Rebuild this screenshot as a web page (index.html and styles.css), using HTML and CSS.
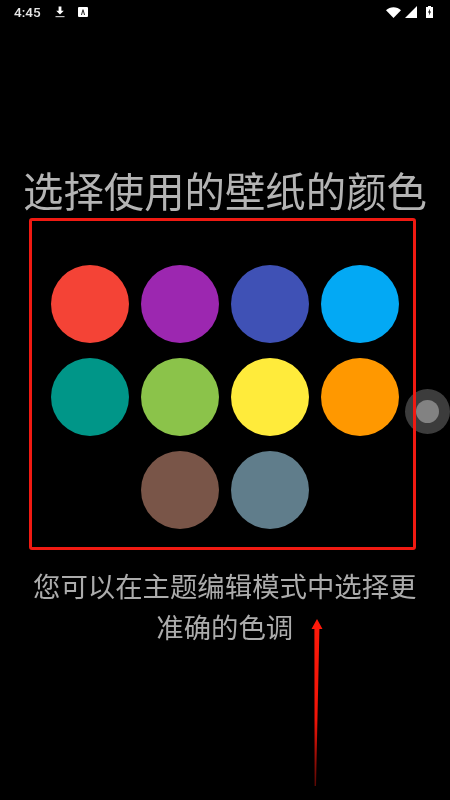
FILE: index.html
```html
<!DOCTYPE html>
<html lang="zh">
<head>
<meta charset="utf-8">
<title>选择颜色</title>
<link rel="stylesheet" href="styles.css">
</head>
<body>
<div class="screen">
  <header class="status">
    <div class="status-left">
      <span class="time">4:45</span>
      <svg class="ic-dl" viewBox="0 0 12 12"><path d="M4.6 0.5h2.8v4.2h2.4L6 8.6 2.2 4.7h2.4z" fill="#fff"/><rect x="1.5" y="10" width="9" height="1.2" fill="#bbb"/></svg>
      <svg class="ic-a" viewBox="0 0 10 10"><rect width="10" height="10" rx="1" fill="#fff"/><path d="M3 8l1.5-5.5h1L7 8H6L5 4.2 4 8z" fill="#222"/></svg>
    </div>
    <div class="status-right">
      <svg class="ic-wifi" viewBox="0 0 15 11"><path d="M0 3.2C4-0.9 11-0.9 15 3.2L7.5 11z" fill="#fff"/></svg>
      <svg class="ic-cell" viewBox="0 0 12 12"><path d="M12 0v12H0z" fill="#fff"/></svg>
      <svg class="ic-batt" viewBox="0 0 7 12"><path d="M2 0h3v1h2v11H0V1h2z" fill="#fff"/><path d="M4.2 2.5L2 6.6h1.4L2.8 9.8 5 5.6H3.7z" fill="#000"/></svg>
    </div>
  </header>
  <main class="content">
    <h1 class="title">选择使用的壁纸的颜色</h1>
    <section class="palette">
      <div class="swatch c-red"></div>
      <div class="swatch c-purple"></div>
      <div class="swatch c-indigo"></div>
      <div class="swatch c-blue"></div>
      <div class="swatch c-teal"></div>
      <div class="swatch c-green"></div>
      <div class="swatch c-yellow"></div>
      <div class="swatch c-orange"></div>
      <div class="swatch c-brown"></div>
      <div class="swatch c-slate"></div>
    </section>
    <p class="hint">您可以在主题编辑模式中选择更<br>准确的色调</p>
  </main>
  <div class="float-btn"><div class="float-dot"></div></div>
  <svg class="arrow" viewBox="0 0 14 170">
    <defs>
      <linearGradient id="fade" x1="0" y1="0" x2="0" y2="1">
        <stop offset="0" stop-color="#ff1a0a"/>
        <stop offset="0.6" stop-color="#f01408"/>
        <stop offset="1" stop-color="#5a0804"/>
      </linearGradient>
    </defs>
    <path d="M8 0L13.5 10H10.4L7 167 5.6 167 5.4 10H2.5z" fill="url(#fade)"/>
  </svg>
</div>
</body>
</html>
```
FILE: styles.css
```css
* { box-sizing: border-box; }
html, body { margin: 0; padding: 0; background: #000; }
.screen {
  position: relative;
  width: 450px;
  height: 800px;
  overflow: hidden;
  background: #000;
  font-family: "Noto Sans CJK SC", "Noto Sans", sans-serif;
}
.status {
  height: 24px;
  padding: 0 14px;
  display: flex;
  align-items: center;
  justify-content: space-between;
}
.status-left, .status-right { display: flex; align-items: center; }
.time {
  font-family: Roboto, sans-serif;
  font-size: 13.5px;
  font-weight: 500;
  color: #e8e8e8;
  width: 40px;
  will-change: transform;
}
.ic-dl { width: 12px; height: 12px; margin-left: 0; }
.ic-a { width: 10px; height: 10px; margin-left: 12px; }
.status-right { padding-right: 3px; }
.ic-wifi { width: 15px; height: 11px; }
.ic-cell { width: 12px; height: 12px; margin-left: 4px; }
.ic-batt { width: 7px; height: 12px; margin-left: 9px; }
.content { display: flex; flex-direction: column; align-items: center; }
.title {
  margin: 140px 0 0;
  font-size: 40.4px;
  line-height: 52px;
  font-weight: 400;
  color: #b4b4b4;
  white-space: nowrap;
  will-change: transform;
}
.palette {
  position: relative;
  z-index: 1;
  width: 387px;
  height: 332px;
  margin: 2px 5px 0 0;
  padding: 44px 14px 0 19px;
  border: 3px solid #f01a12;
  border-radius: 3px;
  display: flex;
  flex-wrap: wrap;
  justify-content: center;
  align-content: flex-start;
  gap: 15px 12px;
}
.swatch { width: 78px; height: 78px; border-radius: 50%; }
.c-red { background: #f44336; }
.c-purple { background: #9c27b0; }
.c-indigo { background: #3f51b5; }
.c-blue { background: #03a9f4; }
.c-teal { background: #009688; }
.c-green { background: #8bc34a; }
.c-yellow { background: #ffeb3b; }
.c-orange { background: #ff9800; }
.c-brown { background: #795548; }
.c-slate { background: #607d8b; }
.hint {
  margin: 15px 0 0;
  font-size: 27.4px;
  line-height: 41px;
  font-weight: 400;
  color: #acacac;
  text-align: center;
  white-space: nowrap;
  will-change: transform;
}
.float-btn {
  position: absolute;
  left: 405px;
  top: 389px;
  width: 45px;
  height: 45px;
  border-radius: 50%;
  background: #3c3c3c;
  display: flex;
  align-items: center;
  justify-content: center;
}
.float-dot { width: 23px; height: 23px; border-radius: 50%; background: #828282; }
.arrow { position: absolute; left: 309px; top: 619px; width: 14px; height: 170px; }
```
